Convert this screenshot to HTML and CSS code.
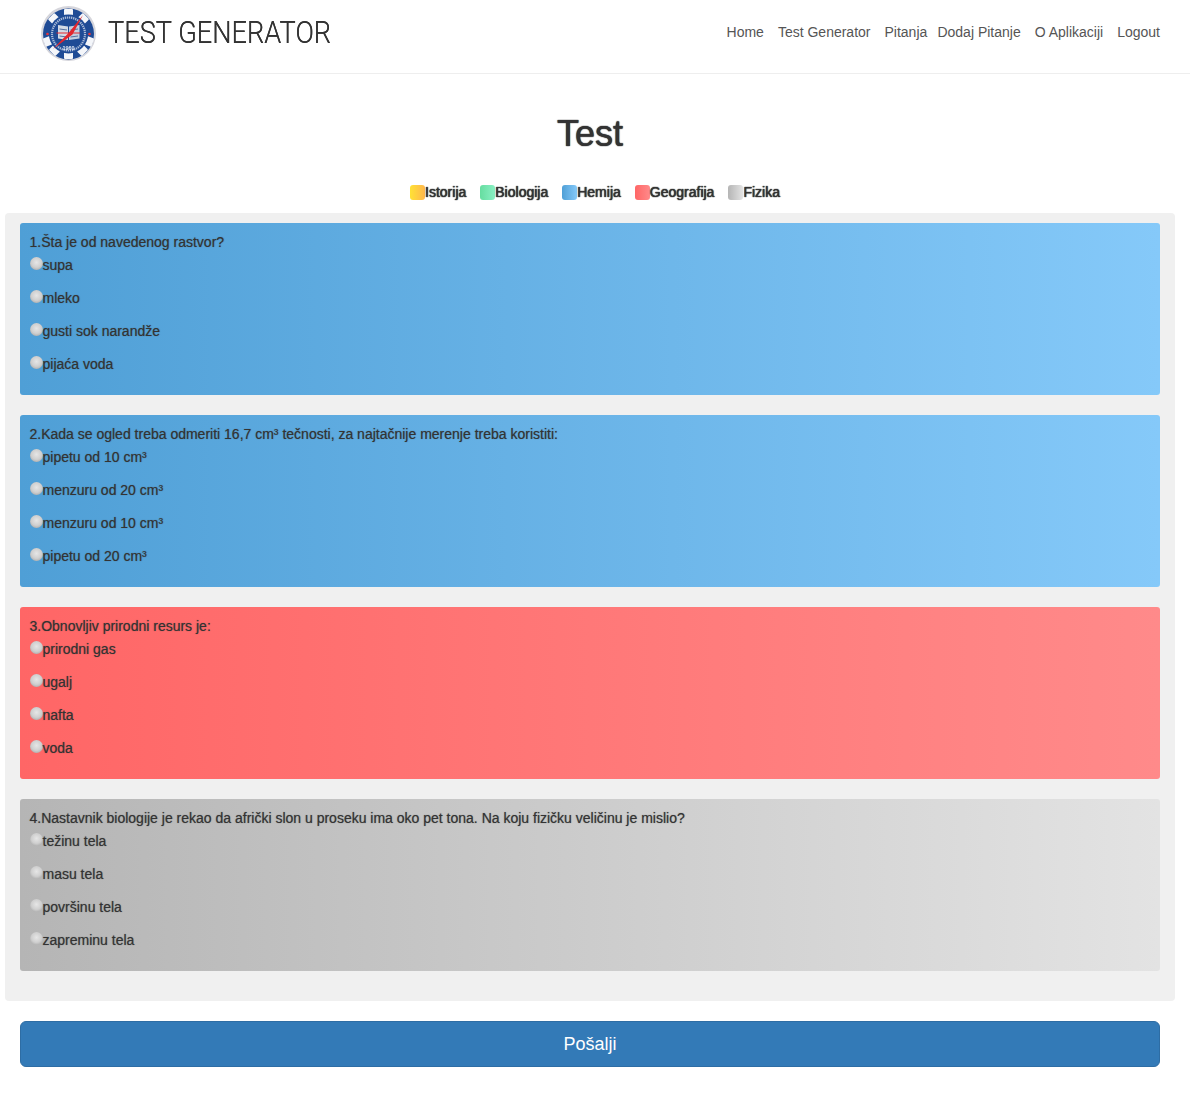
FILE: index.html
```html
<!DOCTYPE html>
<html lang="sr">
<head>
<meta charset="utf-8">
<title>Test Generator</title>
<link rel="stylesheet" href="styles.css">
</head>
<body>
<header class="navbar">
  <a class="brand" href="#">
    <svg class="logo" viewBox="0 0 64 64" width="64" height="64" aria-hidden="true">
      <circle class="logo-halo" cx="32.500" cy="32.500" r="27.500"/>
      <circle class="logo-disc" cx="32.500" cy="33" r="25.500"/>
      <g class="logo-teeth">
        <rect x="28" y="8" width="9" height="7" rx="1"/>
        <rect x="28" y="51" width="9" height="7" rx="1"/>
        <rect x="8" y="36" width="7" height="9" rx="1" transform="rotate(-20 11.500 40.500)"/>
        <rect x="50" y="36" width="7" height="9" rx="1" transform="rotate(20 53.500 40.500)"/>
        <rect x="13" y="14" width="9" height="7" rx="1" transform="rotate(-45 17.500 17.500)"/>
        <rect x="43" y="14" width="9" height="7" rx="1" transform="rotate(45 47.500 17.500)"/>
        <rect x="14" y="46" width="9" height="7" rx="1" transform="rotate(45 18.500 49.500)"/>
        <rect x="42" y="46" width="9" height="7" rx="1" transform="rotate(-45 46.500 49.500)"/>
      </g>
      <circle class="logo-ring" cx="32.500" cy="33" r="19.500"/>
      <circle class="logo-letters" cx="32.500" cy="33" r="16.500"/>
      <circle class="logo-dot" cx="11.500" cy="33" r="1.300"/>
      <circle class="logo-dot" cx="53.500" cy="33" r="1.300"/>
      <path class="logo-page" d="M22 24 L32 25.500 L32 39 L22 37.500 Z"/>
      <path class="logo-page-alt" d="M43.500 24 L33 25.500 L33 39 L43.500 37.500 Z"/>
      <path class="logo-lines" d="M23.500 28 L31 29 M23.500 35 L31 36 M42 28 L34.500 29 M42 35 L34.500 36"/>
      <path class="logo-bar" d="M20.500 31.500 H44 V32.500 H20.500 Z"/>
      <path class="logo-arrow" d="M47 14 L36.500 33.500 L17 48 L33 31.500 Z"/>
      <text class="logo-year" x="32.500" y="49" text-anchor="middle">1960</text>
    </svg>
    <span class="brand-name">TEST GENERATOR</span>
  </a>
  <nav class="nav">
    <a href="#">Home</a>
    <a href="#">Test Generator</a>
    <a class="nav-tight" href="#">Pitanja</a>
    <a href="#">Dodaj Pitanje</a>
    <a href="#">O Aplikaciji</a>
    <a href="#">Logout</a>
  </nav>
</header>

<main>
  <h1 class="title">Test</h1>

  <ul class="legend">
    <li class="legend-item"><span class="swatch yellow"></span>Istorija</li>
    <li class="legend-item"><span class="swatch green"></span>Biologija</li>
    <li class="legend-item"><span class="swatch blue"></span>Hemija</li>
    <li class="legend-item"><span class="swatch red"></span>Geografija</li>
    <li class="legend-item"><span class="swatch grey"></span>Fizika</li>
  </ul>

  <form class="panel">
    <section class="card blue">
      <p class="question">1.Šta je od navedenog rastvor?</p>
      <label class="option"><input type="radio" name="q1">supa</label>
      <label class="option"><input type="radio" name="q1">mleko</label>
      <label class="option"><input type="radio" name="q1">gusti sok narandže</label>
      <label class="option"><input type="radio" name="q1">pijaća voda</label>
    </section>
    <section class="card blue">
      <p class="question">2.Kada se ogled treba odmeriti 16,7 cm³ tečnosti, za najtačnije merenje treba koristiti:</p>
      <label class="option"><input type="radio" name="q2">pipetu od 10 cm³</label>
      <label class="option"><input type="radio" name="q2">menzuru od 20 cm³</label>
      <label class="option"><input type="radio" name="q2">menzuru od 10 cm³</label>
      <label class="option"><input type="radio" name="q2">pipetu od 20 cm³</label>
    </section>
    <section class="card red">
      <p class="question">3.Obnovljiv prirodni resurs je:</p>
      <label class="option"><input type="radio" name="q3">prirodni gas</label>
      <label class="option"><input type="radio" name="q3">ugalj</label>
      <label class="option"><input type="radio" name="q3">nafta</label>
      <label class="option"><input type="radio" name="q3">voda</label>
    </section>
    <section class="card grey">
      <p class="question">4.Nastavnik biologije je rekao da afrički slon u proseku ima oko pet tona. Na koju fizičku veličinu je mislio?</p>
      <label class="option"><input type="radio" name="q4">težinu tela</label>
      <label class="option"><input type="radio" name="q4">masu tela</label>
      <label class="option"><input type="radio" name="q4">površinu tela</label>
      <label class="option"><input type="radio" name="q4">zapreminu tela</label>
    </section>
  </form>

  <div class="actions">
    <button class="submit" type="button">Pošalji</button>
  </div>
</main>
</body>
</html>
```

FILE: styles.css
```css
* { box-sizing: border-box; }

html, body { margin: 0; padding: 0; }

body {
  min-height: 1099px;
  background: #fff;
  color: #333;
  font-family: "Liberation Sans", Arial, sans-serif;
  font-size: 14px;
  line-height: 20px;
}

a { color: inherit; text-decoration: none; }

.navbar {
  display: flex;
  justify-content: space-between;
  align-items: flex-start;
  height: 74px;
  padding: 0 30px 0 36px;
  border-bottom: 1px solid #eee;
}

.brand { display: flex; align-items: center; height: 65px; gap: 8px; }

.logo { display: block; filter: blur(0.6px); }
.logo-halo { fill: #d6d6dc; }
.logo-disc, .logo-ring { fill: #1f4b95; }
.logo-teeth { fill: #f4f6fa; }
.logo-letters { fill: none; stroke: #e4e9f3; stroke-width: 2.200; stroke-dasharray: 1.300 0.800; opacity: 0.7; }
.logo-dot { fill: #e8343a; }
.logo-page { fill: #d4dbe6; }
.logo-page-alt { fill: #c3cedf; }
.logo-lines { stroke: #55709f; stroke-width: 1; fill: none; }
.logo-bar, .logo-arrow { fill: #e3262e; }
.logo-year { font-family: "Liberation Sans", sans-serif; font-size: 5.500px; font-weight: 700; fill: #e8edf6; }

.brand-name {
  display: block;
  width: 222px;
  white-space: nowrap;
  font-family: Roboto, sans-serif;
  font-weight: 300;
  font-size: 31px;
  line-height: 36px;
  color: #333;
  text-shadow: 0 0 0.6px #333;
  transform: scaleX(0.877);
  transform-origin: left center;
}

.nav { display: flex; gap: 14px; padding-top: 22px; color: #555; }

.nav-tight { margin-right: -3.900px; }

.title {
  margin: 40px 10px 0 0;
  text-align: center;
  font-size: 36px;
  line-height: 40px;
  font-weight: 500;
  text-shadow: 0 0 1px #333, 0 0 1px #333;
}

.legend {
  display: flex;
  justify-content: center;
  gap: 14px;
  list-style: none;
  margin: 28px 0 0;
  padding: 0;
  height: 31px;
}

.legend-item {
  display: flex;
  align-items: center;
  height: 20px;
  text-shadow: 0 0 1px #333, 0 0 1px #333;
}

.swatch { width: 15px; height: 15px; border-radius: 3px; }

.yellow { background: linear-gradient(to right, #ffe135, #ffb74d); }
.green { background: linear-gradient(to right, #66dda0, #8af0c4); }
.blue { background: linear-gradient(to right, #4f9fd6, #85c9f9); }
.red { background: linear-gradient(to right, #ff6666, #ff8a8a); }
.grey { background: linear-gradient(to right, #b5b5b5, #e3e3e3); }

.panel {
  display: flex;
  flex-direction: column;
  gap: 20px;
  margin: 0 15px 0 5px;
  padding: 10px 15px 30px;
  background: #f0f0f0;
  border-radius: 4px;
}

.card {
  height: 172px;
  padding: 9px 10px 8px 9.500px;
  border-radius: 3px;
}

.question { margin: 0 0 3px; text-shadow: 0 0 1px rgba(51, 51, 51, 0.6); }

.option {
  display: block;
  height: 20px;
  margin-bottom: 13px;
  text-shadow: 0 0 1px rgba(51, 51, 51, 0.6);
}

.option input {
  appearance: none;
  display: inline-block;
  width: 13px;
  height: 13px;
  margin: 0;
  vertical-align: 0;
  border-radius: 50%;
  background: radial-gradient(circle at 50% 42%, #e6e6e6 0%, #cfcfcf 50%, #979797 100%);
}

.actions { padding: 20px 30px 0 20px; }

.submit {
  display: block;
  width: 100%;
  height: 46px;
  border: 1px solid #2e6da4;
  border-radius: 6px;
  background: #337ab7;
  color: #fff;
  font-family: inherit;
  font-size: 18px;
}
```
